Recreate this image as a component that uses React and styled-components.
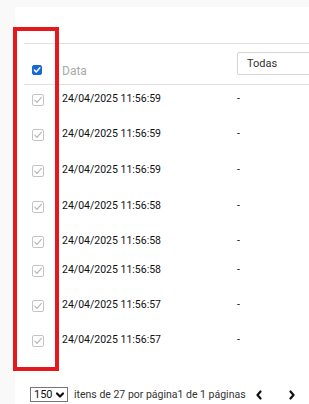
import React from 'react';
import styled, { createGlobalStyle } from 'styled-components';

const GlobalStyle = createGlobalStyle`
  html, body {
    margin: 0;
    padding: 0;
    background: #f9f9f9;
    overflow: hidden;
  }
  body {
    font-family: Roboto, "Liberation Sans", sans-serif;
    color: #111;
  }
`;

const Page = styled.div`
  position: relative;
  width: 309px;
  height: 404px;
  overflow: hidden;
`;

const Panel = styled.div`
  margin: 7px 0 0 15px;
  height: 397px;
  background: #fff;
  padding: 36px 0 0 9px;
  box-sizing: border-box;
`;

const Table = styled.div`
  border-top: 1px solid #e2e2e2;
  width: 320px;
`;

const Grid = styled.div`
  display: grid;
  grid-template-columns: 38px 175px 1fr;
  align-items: start;
`;

const HeaderRow = styled(Grid)`
  height: 40px;
  border-bottom: 1px solid #e2e2e2;
  box-sizing: content-box;
`;

const Row = styled(Grid)`
  height: ${p => p.$h}px;
  padding-top: 7px;
  box-sizing: border-box;
  font-size: 10.5px;
  line-height: 13px;
`;

const Box = styled.span`
  display: flex;
  align-items: center;
  justify-content: center;
  box-sizing: border-box;
  margin: ${p => (p.$head ? '21px 0 0 8px' : '2px 0 0 8px')};
  width: ${p => (p.$head ? 10 : 12)}px;
  height: ${p => (p.$head ? 10 : 12)}px;
  border-radius: 2px;
  background: ${p => (p.$head ? '#1669d6' : '#fff')};
  border: 1px solid ${p => (p.$head ? '#1669d6' : '#c4c4c4')};
`;

const CheckBox = ({ head }) => (
  <Box $head={head}>
    <svg width={head ? 8 : 10} height={head ? 8 : 10} viewBox="0 0 10 10">
      <path
        d="M1.8 5.2 L4 7.4 L8.4 2.4"
        fill="none"
        stroke={head ? '#fff' : '#b5b5b5'}
        strokeWidth={head ? 1.9 : 1.1}
        strokeLinecap="round"
        strokeLinejoin="round"
      />
    </svg>
  </Box>
);

const HeadLabel = styled.div`
  margin-top: 20px;
  font-size: 12px;
  line-height: 14px;
  color: #aaa;
`;

const FilterSelect = styled.div`
  margin-top: 8px;
  height: 23px;
  width: 120px;
  box-sizing: border-box;
  border: 1px solid #d4d4d4;
  border-radius: 2px;
  padding-left: 9px;
  display: flex;
  align-items: center;
  font-size: 11px;
  color: #333;
`;

const Cell = styled.div`
  color: #111;
`;

const Footer = styled.div`
  display: flex;
  align-items: center;
  margin: 37px 0 0 6px;
  font-size: 10.5px;
  color: #333;
`;

const PageSize = styled.div`
  display: flex;
  align-items: center;
  gap: 2px;
  height: 15px;
  width: 38px;
  box-sizing: border-box;
  border: 1px solid #767676;
  padding-left: 3px;
  font-size: 11px;
  color: #111;
  margin-right: 6px;
`;

const NavButton = styled.span`
  display: inline-flex;
  align-items: center;
  margin-left: ${p => p.$ml}px;
`;

const Highlight = styled.div`
  position: absolute;
  left: 13px;
  top: 27px;
  width: 46px;
  height: 344px;
  box-sizing: border-box;
  border: 4px solid #e4191e;
  pointer-events: none;
`;

const Chevron = ({ dir, size = 10 }) => {
  const d = {
    down: 'M2 3.5 L5 6.5 L8 3.5',
    left: 'M6.5 1.5 L3.5 5 L6.5 8.5',
    right: 'M3.5 1.5 L6.5 5 L3.5 8.5',
  }[dir];
  return (
    <svg width={size} height={size} viewBox="0 0 10 10">
      <path d={d} fill="none" stroke="#111" strokeWidth="2.2" strokeLinecap="round" strokeLinejoin="round" />
    </svg>
  );
};

const rows = [
  { t: '24/04/2025 11:56:59', h: 35 },
  { t: '24/04/2025 11:56:59', h: 36 },
  { t: '24/04/2025 11:56:59', h: 36 },
  { t: '24/04/2025 11:56:58', h: 35 },
  { t: '24/04/2025 11:56:58', h: 29 },
  { t: '24/04/2025 11:56:58', h: 35 },
  { t: '24/04/2025 11:56:57', h: 35 },
  { t: '24/04/2025 11:56:57', h: 24 },
];

function App() {
  return (
    <Page>
      <GlobalStyle />
      <Panel>
        <Table>
          <HeaderRow>
            <CheckBox head />
            <HeadLabel>Data</HeadLabel>
            <FilterSelect>Todas</FilterSelect>
          </HeaderRow>
          {rows.map((r, i) => (
            <Row key={i} $h={r.h}>
              <CheckBox />
              <Cell>{r.t}</Cell>
              <Cell>-</Cell>
            </Row>
          ))}
        </Table>
        <Footer>
          <PageSize>
            150
            <Chevron dir="down" size={10} />
          </PageSize>
          itens de 27 por página1 de 1 páginas
          <NavButton $ml={8}>
            <Chevron dir="left" />
          </NavButton>
          <NavButton $ml={23}>
            <Chevron dir="right" />
          </NavButton>
        </Footer>
      </Panel>
      <Highlight />
    </Page>
  );
}

export default App;
